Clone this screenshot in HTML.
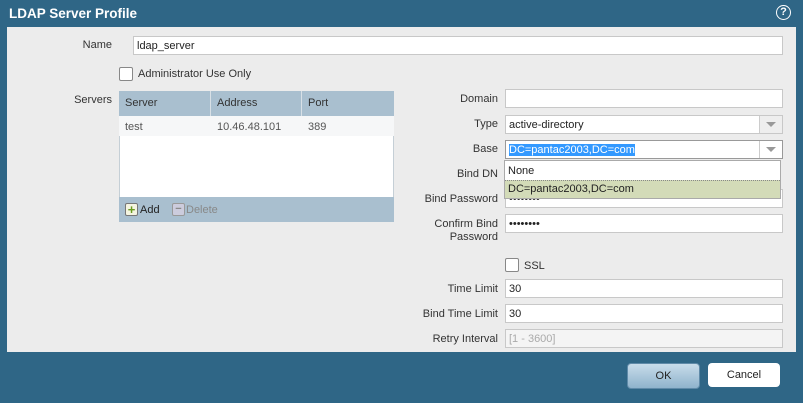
<!DOCTYPE html><html><head><style>
body{margin:0;width:803px;height:403px;overflow:hidden;background:#2f6686;font-family:"Liberation Sans",sans-serif;font-size:11px;color:#333}
.a{position:absolute}
.title{left:9px;top:6px;color:#fff;font-weight:bold;font-size:13.5px}
.content{left:7px;top:27px;width:789px;height:325px;background:#ececec}
.in{position:absolute;background:#fff;border:1px solid #c8c8c8;height:17px;box-sizing:content-box;line-height:18px;padding-left:3px;color:#222}
.lb{position:absolute;text-align:right;width:200px;color:#333}
.cb{position:absolute;width:12px;height:12px;background:#fff;border:1px solid #888;border-radius:2px}
.arr{position:absolute;width:22px;height:17px;background:#eee;border-left:1px solid #ccc}
.arr:after{content:"";position:absolute;left:6px;top:6px;border-left:5px solid transparent;border-right:5px solid transparent;border-top:5px solid #999}
.btn{position:absolute;height:24px;line-height:24px;text-align:center;border-radius:4px;color:#222}
</style></head><body>
<div class="a title">LDAP Server Profile</div>
<div class="a" style="left:776px;top:5px;width:13px;height:13px;border:1.5px solid #fff;border-radius:50%;color:#fff;font-weight:bold;font-size:11px;text-align:center;line-height:13px">?</div>
<div class="a content"></div>
<div class="lb" style="left:-88px;top:39px">Name</div>
<div class="in" style="left:133px;top:36px;width:645px">ldap_server</div>
<div class="cb" style="left:119px;top:67px"></div>
<div class="a" style="left:138px;top:68px">Administrator Use Only</div>
<div class="lb" style="left:-88px;top:94px">Servers</div>
<div class="a" style="left:119px;top:91px;width:275px;height:131px;background:#fff;border:1px solid #c5cfd6;box-sizing:border-box"></div>
<div class="a" style="left:119px;top:91px;width:275px;height:25px;background:#a9bfcf"></div>
<div class="a" style="left:210px;top:91px;width:1px;height:45px;background:#d8e0e6"></div>
<div class="a" style="left:301px;top:91px;width:1px;height:45px;background:#d8e0e6"></div>
<div class="a" style="left:125px;top:97px">Server</div>
<div class="a" style="left:217px;top:97px">Address</div>
<div class="a" style="left:308px;top:97px">Port</div>
<div class="a" style="left:119px;top:116px;width:275px;height:20px;background:#f6f7f8"></div>
<div class="a" style="left:125px;top:121px;color:#555">test</div>
<div class="a" style="left:217px;top:121px;color:#555">10.46.48.101</div>
<div class="a" style="left:308px;top:121px;color:#555">389</div>
<div class="a" style="left:119px;top:197px;width:275px;height:25px;background:#a9bfcf"></div>
<div class="a" style="left:125px;top:203px;width:11px;height:11px;border:1px solid #777;border-radius:2px;background:#f4f4e0;color:#6a9a20;font-weight:bold;font-size:13px;line-height:11px;text-align:center">+</div>
<div class="a" style="left:140px;top:204px;color:#222">Add</div>
<div class="a" style="left:172px;top:203px;width:11px;height:11px;border:1px solid #999;border-radius:2px;background:#ccd;color:#888;font-weight:bold;line-height:10px;text-align:center">−</div>
<div class="a" style="left:186px;top:204px;color:#888">Delete</div>

<div class="lb" style="left:298px;top:93px">Domain</div>
<div class="in" style="left:505px;top:89px;width:273px"></div>
<div class="lb" style="left:298px;top:118px">Type</div>
<div class="in" style="left:505px;top:115px;width:273px">active-directory<div class="arr" style="right:0;top:0"></div></div>
<div class="lb" style="left:298px;top:143px">Base</div>
<div class="in" style="left:505px;top:140px;width:273px;border-color:#999"><span style="background:#3399ff;color:#fff">DC=pantac2003,DC=com</span><div class="arr" style="right:0;top:0;background:#fff"></div></div>
<div class="lb" style="left:298px;top:168px">Bind DN</div>
<div class="lb" style="left:298px;top:193px">Bind Password</div>
<div class="in" style="left:505px;top:189px;width:273px">••••••••</div>
<div class="a" style="left:504px;top:160px;width:277px;height:39px;background:#fff;border:1px solid #aaa;box-sizing:border-box"></div>
<div class="a" style="left:508px;top:165px;color:#222">None</div>
<div class="a" style="left:505px;top:180px;width:275px;height:18px;background:#d3dbb8;border-top:1px dotted #888;box-sizing:border-box"></div>
<div class="a" style="left:508px;top:183px;color:#222">DC=pantac2003,DC=com</div>
<div class="lb" style="left:298px;top:218px;line-height:13px">Confirm Bind<br>Password</div>
<div class="in" style="left:505px;top:214px;width:273px">••••••••</div>
<div class="cb" style="left:505px;top:258px"></div>
<div class="a" style="left:524px;top:260px">SSL</div>
<div class="lb" style="left:298px;top:283px">Time Limit</div>
<div class="in" style="left:505px;top:279px;width:273px">30</div>
<div class="lb" style="left:298px;top:308px">Bind Time Limit</div>
<div class="in" style="left:505px;top:304px;width:273px">30</div>
<div class="lb" style="left:298px;top:333px">Retry Interval</div>
<div class="in" style="left:505px;top:329px;width:273px;color:#aaa;background:#f4f4f4">[1 - 3600]</div>
<div class="btn" style="left:627px;top:363px;width:71px;background:linear-gradient(#c8dcea,#8fb3cc);border:1px solid #5f8aa8">OK</div>
<div class="btn" style="left:708px;top:363px;width:72px;background:#fff">Cancel</div>
</body></html>
